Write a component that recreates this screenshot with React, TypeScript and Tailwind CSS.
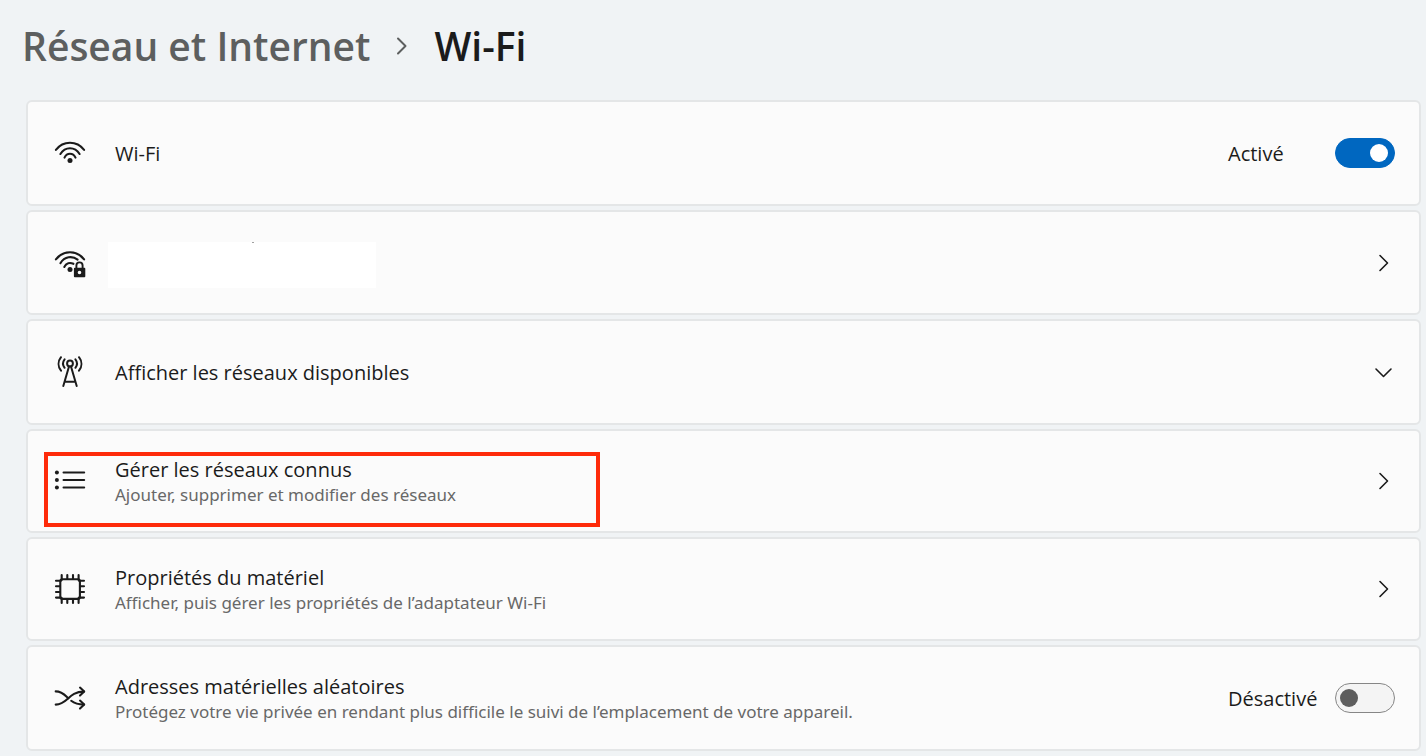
import React, { useState } from "react";

function WifiIcon() {
  return (
    <svg viewBox="0 0 32 32" className="h-8 w-8 shrink-0" fill="none" stroke="currentColor" strokeWidth="2.1" strokeLinecap="round">
      <path d="M1.9 12.8C9.2 3.4 22.8 3.4 30.1 12.8" />
      <path d="M6.4 17C11.2 9.4 20.8 9.4 25.6 17" />
      <path d="M10.5 20.6C13 15.4 19 15.4 21.5 20.6" />
      <circle cx="16" cy="23.5" r="2.5" fill="currentColor" stroke="none" />
    </svg>
  );
}

function SecureWifiIcon() {
  return (
    <svg viewBox="0 0 32 32" className="h-8 w-8 shrink-0" fill="none" stroke="currentColor" strokeWidth="2.1" strokeLinecap="round">
      <path d="M1.9 12.3C9.2 2.9 22.8 2.9 30.1 12.3" />
      <path d="M6.4 16.2C10.6 9.3 18.3 8.5 23.6 12.6" />
      <path d="M10.3 20C12.2 16 16 15.2 19.4 16.8" />
      <circle cx="16" cy="22.4" r="2.5" fill="currentColor" stroke="none" />
      <path d="M22.4 21.5v-3a3.1 3.1 0 0 1 6.2 0v3" strokeWidth="1.9" />
      <path fillRule="evenodd" fill="currentColor" stroke="none" d="M20.8 20.8h9.6a.9.9 0 0 1 .9.9v7.6a.9.9 0 0 1-.9.9h-9.6a.9.9 0 0 1-.9-.9v-7.6a.9.9 0 0 1 .9-.9zM25.5 23.7a1.8 1.8 0 1 0 0 3.6a1.8 1.8 0 1 0 0-3.6z" />
    </svg>
  );
}

function TowerIcon() {
  return (
    <svg viewBox="0 0 32 32" className="h-8 w-8 shrink-0" fill="none" stroke="currentColor" strokeWidth="2" strokeLinecap="round">
      <circle cx="16" cy="7.5" r="2.9" />
      <path d="M15 10.5L9.3 30M17 10.5l5.7 19.5M10.6 25.8h10.8" />
      <path d="M10.6 3.4c-2 2.6-2 5.8 0 8.4M21.4 3.4c2 2.6 2 5.8 0 8.4" />
      <path d="M7 1.2c-3.2 4-3.2 9.4 0 13.4M25 1.2c3.2 4 3.2 9.4 0 13.4" />
    </svg>
  );
}

function ListIcon() {
  return (
    <svg viewBox="0 0 32 32" className="h-8 w-8 shrink-0" fill="none" stroke="currentColor" strokeWidth="2" strokeLinecap="round">
      <path d="M9.5 7.5H30.2M9.5 15H30.2M9.5 22.5H30.2" />
      <g fill="currentColor" stroke="none">
        <circle cx="2.9" cy="7.5" r="2" />
        <circle cx="2.9" cy="15" r="2" />
        <circle cx="2.9" cy="22.5" r="2" />
      </g>
    </svg>
  );
}

function ChipIcon() {
  return (
    <svg viewBox="0 0 32 32" className="h-8 w-8 shrink-0" fill="none" stroke="currentColor" strokeWidth="2.1" strokeLinecap="round">
      <rect x="6.3" y="6.3" width="19.6" height="19.6" rx="2.2" />
      <path d="M7.7 2v5M13.3 2v4M19 2v4M24.6 2v5M7.7 25v5M13.3 26v4M19 26v4M24.6 25v5" />
      <path d="M2 7.7h5M2 13.3h4M2 19h4M2 24.6h5M25 7.7h5M26 13.3h4M26 19h4M25 24.6h5" />
    </svg>
  );
}

function ShuffleIcon() {
  return (
    <svg viewBox="0 0 32 32" className="h-8 w-8 shrink-0" fill="none" stroke="currentColor" strokeWidth="2.1" strokeLinecap="round" strokeLinejoin="round">
      <path d="M1.7 9.4C8 9.4 10.8 13 14.2 16.2" />
      <path d="M17.2 18.8C20.2 21.2 23 22.6 30 22.6" />
      <path d="M1.7 22.6C14 22.6 14 9.6 30 9.6" />
      <path d="M26 5.6l4.2 4-4.2 4M26 18.6l4.2 4-4.2 4" />
    </svg>
  );
}

function Chevron({ down = false }: { down?: boolean }) {
  return (
    <svg viewBox="0 0 24 24" className="h-6 w-6 shrink-0" fill="none" stroke="currentColor" strokeWidth="1.6" strokeLinecap="round" strokeLinejoin="round">
      <path d={down ? "M5 9l7.5 7.5 7.5-7.5" : "M9 4.5l7.5 7.5-7.5 7.5"} />
    </svg>
  );
}

function RowText({ title, detail }: { title: string; detail?: string }) {
  return (
    <span className="flex flex-1 flex-col pt-[2px] text-left">
      <span className="text-[20px] leading-[26px]">{title}</span>
      {detail && (
        <span className="font-['Noto_Sans',sans-serif] text-[17px] leading-6 text-[#686868]">
          {detail}
        </span>
      )}
    </span>
  );
}

type ToggleRowProps = {
  id: string;
  icon: React.ReactNode;
  title: string;
  detail?: string;
  initial: boolean;
};

const card =
  "relative flex w-full items-center gap-[29px] rounded-md border-2 border-[#e4e6e7] bg-[#fbfbfb] pr-6 pl-[26px]";

function ToggleRow({ id, icon, title, detail, initial }: ToggleRowProps) {
  const [on, setOn] = useState(initial);

  return (
    <div className={`${card} min-h-[106px]`}>
      {icon}
      <label htmlFor={id} className="flex flex-1">
        <RowText title={title} detail={detail} />
      </label>
      <div className="flex items-center">
        <span className="w-[107px] pt-[2px] text-[20px] leading-[26px]">
          {on ? "Activé" : "Désactivé"}
        </span>
        <input
          id={id}
          type="checkbox"
          role="switch"
          checked={on}
          onChange={(e) => setOn(e.target.checked)}
          className="flex h-[30px] w-[60px] appearance-none items-center rounded-full border border-[#868686] bg-[#f4f4f4] px-1 before:h-[18px] before:w-[18px] before:rounded-full before:bg-[#5d5d5d] checked:justify-end checked:border-[#0067c0] checked:bg-[#0067c0] checked:px-[6px] checked:before:bg-white"
        />
      </div>
    </div>
  );
}

export default function App() {
  return (
    <main className="min-h-screen bg-[#f0f3f5] pr-[5px] pb-[5px] pl-[26px] font-['Open_Sans','Noto_Sans',sans-serif] text-[#1b1b1b]">
      <nav className="-ml-1 flex h-[100px] items-center pb-2 text-[39px] leading-[52px] font-semibold">
        <a href="#reseau" className="text-[#5d5f5f]">
          Réseau et Internet
        </a>
        <svg viewBox="0 0 24 24" className="mx-5 h-6 w-6 text-[#5d5f5f]" fill="none" stroke="currentColor" strokeWidth="2" strokeLinecap="round" strokeLinejoin="round">
          <path d="M8 4.5l7.5 7.5-7.5 7.5" />
        </svg>
        <h1>Wi-Fi</h1>
      </nav>

      <div className="flex flex-col gap-1">
        <ToggleRow id="wifi" icon={<WifiIcon />} title="Wi-Fi" initial={true} />

        {/* Current network, name hidden */}
        <button type="button" aria-label="Réseau actuel" className={`${card} min-h-[105px]`}>
          <SecureWifiIcon />
          <span className="flex flex-1 pt-1">
            <span className="-ml-[7px] flex h-[46px] w-[268px] bg-white pl-36">
              <span className="h-px w-0.5 bg-[#a0a0a0]" />
            </span>
          </span>
          <Chevron />
        </button>

        <button type="button" className={`${card} min-h-[106px]`}>
          <TowerIcon />
          <RowText title="Afficher les réseaux disponibles" />
          <Chevron down />
        </button>

        <button type="button" className={`${card} min-h-[104px]`}>
          <ListIcon />
          <RowText title="Gérer les réseaux connus" detail="Ajouter, supprimer et modifier des réseaux" />
          <Chevron />
          {/* Highlight frame */}
          <span className="pointer-events-none absolute top-[21px] left-4 h-[75px] w-[556px] border-4 border-[#fe2b0a]" />
        </button>

        <button type="button" className={`${card} min-h-[104px]`}>
          <ChipIcon />
          <RowText title="Propriétés du matériel" detail="Afficher, puis gérer les propriétés de l’adaptateur Wi-Fi" />
          <Chevron />
        </button>

        <ToggleRow
          id="random-address"
          icon={<ShuffleIcon />}
          title="Adresses matérielles aléatoires"
          detail="Protégez votre vie privée en rendant plus difficile le suivi de l’emplacement de votre appareil."
          initial={false}
        />
      </div>
    </main>
  );
}
